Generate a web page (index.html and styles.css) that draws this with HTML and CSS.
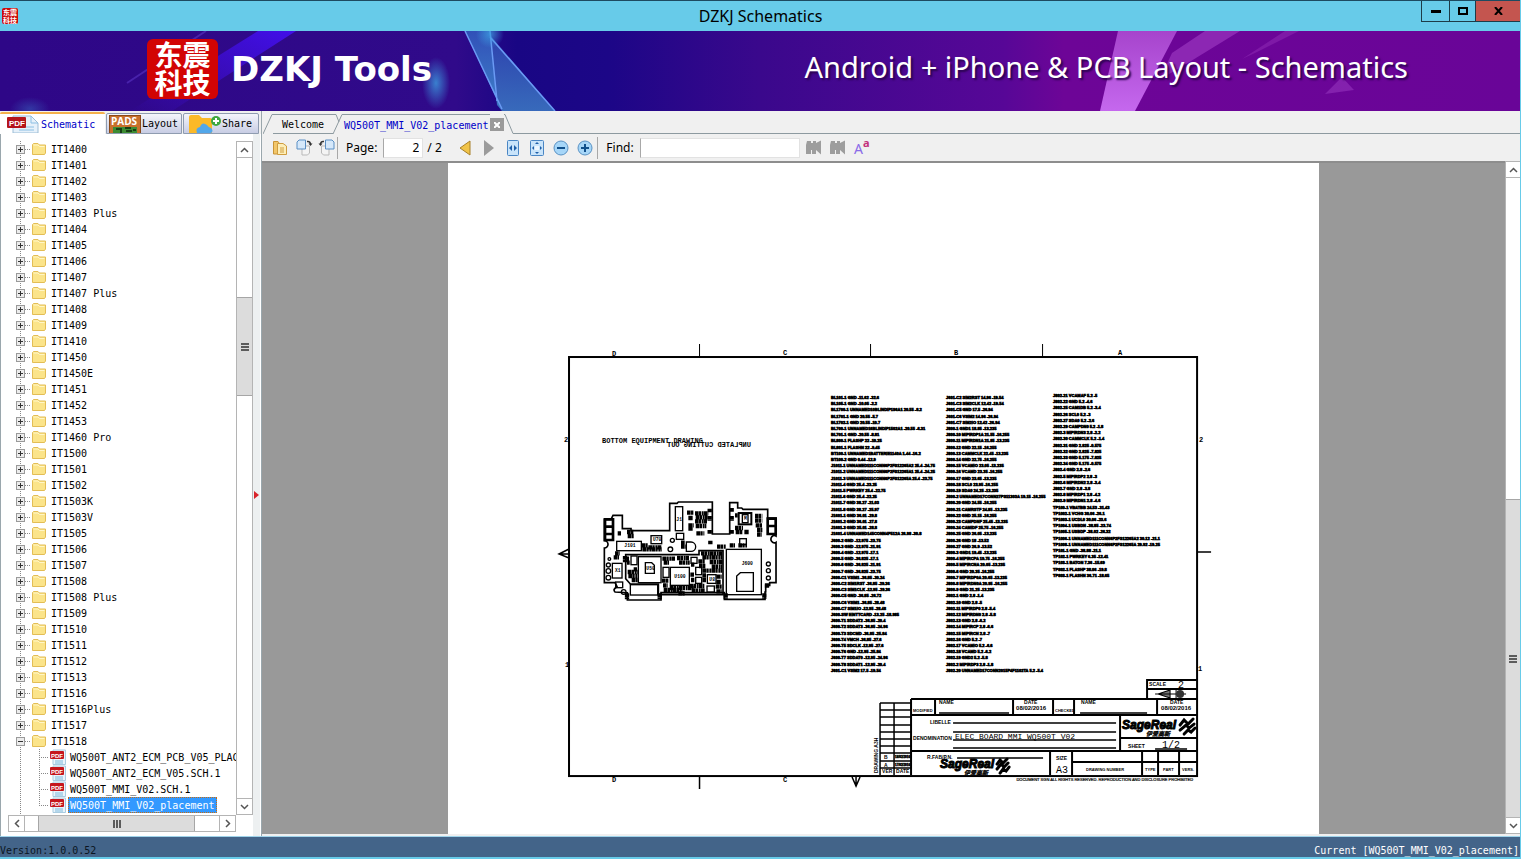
FILE: index.html
```html
<!DOCTYPE html>
<html lang="en">
    <head>
        <meta charset="utf-8">
        <title>DZKJ Schematics</title>
        <link rel="stylesheet" href="styles.css">
    </head>
    <body>
        <!-- shared icons -->
        <svg class="defs" width="0" height="0">
            <symbol id="folder" viewBox="0 0 14 12">
                <path d="M.5 11.500V1.500L1.500.500H6L7.500 2H13.500V10L12.500 11.500Z" fill="#fbe48a" stroke="#e3bd55"/>
                <path d="M1.500 2H6L7.500 3.500H12.500" fill="none" stroke="#fff6c8"/>
            </symbol>
            <symbol id="pdf" viewBox="0 0 16 16">
                <path d="M3 1H15.500V15.500H3Z" fill="#eaf4fb" stroke="#a9cbe0"/>
                <path d="M5 12H13M5 14H13" stroke="#7db9dc"/>
                <rect y="2" width="14" height="8" rx="1" fill="#c5161d"/>
                <text x="1" y="9" font-family="Liberation Sans" font-size="6" font-weight="bold" fill="#fff">PDF</text>
            </symbol>
            <symbol id="up" viewBox="0 0 9 6"><path d="M1 5L4.500 1.500L8 5" fill="none" stroke="#555" stroke-width="1.500"/></symbol>
            <symbol id="down" viewBox="0 0 9 6"><path d="M1 1L4.500 4.500L8 1" fill="none" stroke="#555" stroke-width="1.500"/></symbol>
            <symbol id="left" viewBox="0 0 6 9"><path d="M5 1L1.500 4.500L5 8" fill="none" stroke="#555" stroke-width="1.500"/></symbol>
            <symbol id="right" viewBox="0 0 6 9"><path d="M1 1L4.500 4.500L1 8" fill="none" stroke="#555" stroke-width="1.500"/></symbol>
            <symbol id="rotate" viewBox="0 0 17 17">
                <path d="M6 7H13.500V14L11.500 16H6Z" fill="#f4f4f4" stroke="#b9b9b9"/>
                <path d="M1 3L3 1H9.500V10H1Z" fill="#d5e8fa" stroke="#5a8fc4"/>
                <path d="M11 2.500Q14 2 14.500 5" fill="none" stroke="#333" stroke-width="1.500"/>
                <path d="M12.500 4.500H16.500L14.500 7Z" fill="#333"/>
            </symbol>
            <symbol id="binoc" viewBox="0 0 16 15">
                <path d="M1 1H5V3H7V1H10V3L15 .5V14.500L10 10V14H6V10H5V14H0V5Z" fill="#9d9d9d"/>
            </symbol>
        </svg>

        <header class="titlebar">
            <span class="app-icon">东震<br>科技</span>
            <h1>DZKJ Schematics</h1>
            <div class="win-buttons">
                <button class="min" aria-label="Minimize"><svg width="10" height="3"><path d="M0 0H10V3H0Z"/></svg></button>
                <button class="max" aria-label="Maximize"><svg width="10" height="8"><path d="M1 1H9V7H1Z" fill="none" stroke="#000" stroke-width="2"/></svg></button>
                <button class="close" aria-label="Close"><svg width="9" height="8"><path d="M1 0L8 8M8 0L1 8" stroke="#000" stroke-width="2"/></svg></button>
            </div>
        </header>

        <div class="banner">
            <svg class="banner-art" viewBox="0 0 1520 80" preserveAspectRatio="none">
                <defs>
                    <linearGradient id="base">
                        <stop offset="0" stop-color="#2e0787"/>
                        <stop offset=".3" stop-color="#300a8a"/>
                        <stop offset=".34" stop-color="#190684"/>
                        <stop offset=".4" stop-color="#1c0687"/>
                        <stop offset=".5" stop-color="#3a088c"/>
                        <stop offset=".66" stop-color="#570797"/>
                        <stop offset=".7" stop-color="#6d0597"/>
                        <stop offset="1" stop-color="#690598"/>
                    </linearGradient>
                    <linearGradient id="beam" x1="1" y1="0" x2="0" y2="1">
                        <stop offset="0" stop-color="#4410f4" stop-opacity=".9"/>
                        <stop offset="1" stop-color="#4410f4" stop-opacity="0"/>
                    </linearGradient>
                    <linearGradient id="shard" x1="0" y1="0" x2="0" y2="1">
                        <stop offset="0" stop-color="#3150b8"/>
                        <stop offset="1" stop-color="#3f83c9"/>
                    </linearGradient>
                    <linearGradient id="pink" x1="0" y1="0" x2="0" y2="1">
                        <stop offset="0" stop-color="#a644cc"/>
                        <stop offset="1" stop-color="#c568ee"/>
                    </linearGradient>
                    <radialGradient id="glow">
                        <stop offset="0" stop-color="#3c9de0" stop-opacity=".8"/>
                        <stop offset="1" stop-color="#3c9de0" stop-opacity="0"/>
                    </radialGradient>
                </defs>
                <rect width="1520" height="80" fill="url(#base)"/>
                <path d="M258 0H296L172 80H130Z" fill="url(#beam)"/>
                <path d="M206 0L127 52" stroke="#5a34c4" stroke-width="2" opacity=".6"/>
                <ellipse cx="436" cy="52" rx="14" ry="26" fill="url(#glow)"/>
                <ellipse cx="30" cy="78" rx="20" ry="12" fill="url(#glow)" opacity=".4"/>
                <path d="M465 0H490L497 72L502 80Z" fill="url(#shard)"/>
                <path d="M490 4L555 80H502L497 74Z" fill="url(#shard)" opacity=".8"/>
                <path d="M465 0L502 78M490 0L497 70M490 6L555 80" fill="none" stroke="#6a9af4" stroke-width="1.500"/>
                <circle cx="490" cy="3" r="14" fill="url(#glow)"/>
                <path d="M1118 0H1177L1135 80H1100Z" fill="url(#pink)"/>
                <path d="M1205 0H1240L1178 38L1160 48L1172 22Z" fill="#9a36bf" opacity=".7"/>
                <path d="M1285 0H1299L1255 22L1242 28Z" fill="#9a36bf" opacity=".4"/>
                <path d="M1342 46L1354 59L1325 63Z" fill="#9434bd" opacity=".6"/>
            </svg>
            <div class="banner-text">
                <div class="logo">东震<br>科技</div>
                <strong>DZKJ Tools</strong>
                <span>Android + iPhone &amp; PCB Layout - Schematics</span>
            </div>
        </div>

        <main>
            <aside>
                <nav class="side-tabs">
                    <button class="side-tab active">
                        <svg width="33" height="18" viewBox="0 0 33 18">
                            <path d="M6 1H24L31 8V18H6Z" fill="#e6f1fa" stroke="#9dbdd6"/>
                            <path d="M24 1V8H31M12 12H27M12 15H27" fill="none" stroke="#8cc0e4"/>
                            <rect width="19" height="11" y="2" rx="1" fill="#b5141b"/>
                            <text x="2" y="11" font-family="Liberation Sans" font-size="8" font-weight="bold" fill="#fff">PDF</text>
                        </svg>
                        Schematic
                    </button>
                    <button class="side-tab">
                        <svg width="32" height="18" viewBox="0 0 32 18">
                            <rect x=".5" y=".5" width="31" height="18" fill="#c8702c" stroke="#8a4a18"/>
                            <text x="2" y="10" font-family="Open Sans" font-size="10" font-weight="bold" fill="#fff">PADS</text>
                            <rect x="4" y="12" width="24" height="6" fill="#3d8c33"/>
                            <path d="M7 14H12V18M16 13H22M24 15H27M17 16H23" stroke="#173f15" stroke-width="2" fill="none"/>
                        </svg>
                        Layout
                    </button>
                    <button class="side-tab share">
                        <svg width="32" height="18" viewBox="0 0 32 18">
                            <path d="M0 18V2Q0 0 2 0H10L13 3H21Q23 3 23 5V18Z" fill="#fbb928"/>
                            <path d="M8 18Q6 13 11 12Q13 6 18 10Q20 13 22 13Q25 16 22 18Z" fill="#52a7ea"/>
                            <circle cx="27" cy="6" r="5" fill="#3fa83f"/>
                            <path d="M27 3V9M24 6H30" stroke="#fff" stroke-width="2"/>
                        </svg>
                        Share
                    </button>
                </nav>
                <div class="tree-panel">
                    <div class="tree-box">
                        <ul class="tree"></ul>
                        <div class="vscroll tree-vscroll">
                            <button aria-label="Scroll up"><svg width="9" height="6"><use href="#up"/></svg></button>
                            <div class="thumb"><i></i></div>
                            <button aria-label="Scroll down"><svg width="9" height="6"><use href="#down"/></svg></button>
                        </div>
                    </div>
                    <div class="hscroll">
                        <button aria-label="Scroll left"><svg width="6" height="9"><use href="#left"/></svg></button>
                        <div class="thumb"><i></i></div>
                        <button aria-label="Scroll right"><svg width="6" height="9"><use href="#right"/></svg></button>
                    </div>
                </div>
            </aside>
            <div class="splitter"><svg width="5" height="8"><path d="M0 0L5 4L0 8Z" fill="#d8232a"/></svg></div>

            <section class="viewer">
                <nav class="doc-tabs">
                    <svg class="tab-edge" width="10" height="20"><path d="M0 20L9 .5H10" fill="none" stroke="#8d9aa0"/></svg>
                    <button class="doc-tab">Welcome</button>
                    <svg class="tab-edge" width="10" height="20"><path d="M0 .5H3L6 8M0 20L9 .5H10" fill="none" stroke="#8d9aa0"/></svg>
                    <button class="doc-tab active">WQ500T_MMI_V02_placement</button>
                    <button class="tab-close" aria-label="Close tab"><svg width="6" height="6"><path d="M0 0L6 6M6 0L0 6" stroke="#fff" stroke-width="2"/></svg></button>
                    <svg class="tab-edge" width="10" height="20"><path d="M0 .5H1L9 19.500H10" fill="none" stroke="#8d9aa0"/></svg>
                    <div class="tab-rest"></div>
                </nav>
                <div class="toolbar">
                    <button class="tool" aria-label="Open"><svg width="16" height="16">
                        <path d="M1.500 1.500H6L7 3V14H1.500Z" fill="#f2c66a" stroke="#c99436"/>
                        <path d="M5.500 3.500H11L14.500 6V14.500H5.500Z" fill="#fdeeb8" stroke="#cf9d40"/>
                        <path d="M8 8H12M8 10H12M8 12H12" stroke="#cf9d40"/>
                    </svg></button>
                    <button class="tool" aria-label="Rotate right"><svg width="17" height="17"><use href="#rotate"/></svg></button>
                    <button class="tool flip" aria-label="Rotate left"><svg width="17" height="17"><use href="#rotate"/></svg></button>
                    <span class="sep"></span>
                    <label for="page">Page:</label>
                    <input id="page" class="page-input" value="2">
                    <span class="count">/ 2</span>
                    <button class="tool" aria-label="Previous page"><svg width="12" height="16"><path d="M11 1V15L1 8Z" fill="#f0c348" stroke="#a8802a"/></svg></button>
                    <button class="tool" aria-label="Next page"><svg width="12" height="16"><path d="M1 0V16L11 8Z" fill="#9b9b9b"/></svg></button>
                    <button class="tool" aria-label="Fit width"><svg width="14" height="16">
                        <rect x="1.500" y=".5" width="11" height="15" rx="1" fill="#c9e4fa" stroke="#4a86c4"/>
                        <path d="M6 5V11L3 8ZM8 5V11L11 8Z" fill="#1f5fa8"/>
                    </svg></button>
                    <button class="tool" aria-label="Fit page"><svg width="14" height="16">
                        <rect x=".5" y=".5" width="13" height="15" rx="1" fill="#c9e4fa" stroke="#4a86c4"/>
                        <path d="M7 2L9 4H5ZM7 14L9 12H5ZM2 8L4 6V10ZM12 8L10 6V10Z" fill="#1f5fa8"/>
                        <rect x="5" y="6" width="4" height="4" fill="#eef7ff"/>
                    </svg></button>
                    <button class="tool" aria-label="Zoom out"><svg width="16" height="16">
                        <circle cx="8" cy="8" r="7" fill="#a6d6f8" stroke="#5a92c4"/><path d="M4 8H12" stroke="#10508c" stroke-width="2"/>
                    </svg></button>
                    <button class="tool" aria-label="Zoom in"><svg width="16" height="16">
                        <circle cx="8" cy="8" r="7" fill="#a6d6f8" stroke="#5a92c4"/><path d="M4 8H12M8 4V12" stroke="#10508c" stroke-width="2"/>
                    </svg></button>
                    <span class="sep"></span>
                    <label for="find">Find:</label>
                    <input id="find" class="find-input">
                    <button class="tool" aria-label="Find previous"><svg width="16" height="15"><use href="#binoc"/></svg></button>
                    <button class="tool" aria-label="Find next"><svg width="16" height="15"><use href="#binoc"/></svg></button>
                    <button class="tool case" aria-label="Match case"><span>A</span><sup>a</sup></button>
                </div>
                <div class="canvas">
                    <div class="pages">
                        <svg class="sheet" viewBox="448 163 870 672">
                            <!-- frame -->
                            <rect x="569" y="357" width="628" height="419" fill="none" stroke="#000" stroke-width="2"/>
                            <path class="thin" d="M699.500 344V357M870.500 344V357M1042.500 344V357"/>
                            <path class="line" d="M1197 552H1211M699.500 776V789M569 549L559 554L569 558M559 554H569M852 777L856 786L860 777M856 777V786"/>
                            <g class="mark">
                                <text x="612" y="356">D</text><text x="783" y="355">C</text><text x="954" y="355">B</text><text x="1118" y="355">A</text>
                                <text x="612" y="782">D</text><text x="783" y="782">C</text>
                                <text x="564" y="442">2</text><text x="565" y="667">1</text><text x="1199" y="442">2</text><text x="1198" y="671">1</text>
                            </g>
                            <text class="note" x="602" y="443">BOTTOM EQUIPMENT DRAWING</text>
                            <text class="note" transform="translate(751 447) scale(-1 1)">UNPLATED CUTTING OUT</text>

                            <!-- board -->
                            <g class="board" transform="translate(595 430) scale(.3333)">
                                <path stroke-width="5" d="M28 268H48L54 256H82V296H108V302H224V220H246L250 216H352V312H404V218H428V234H440L444 238H518V264H543V318A10 11 0 1 0 543 337V458H524V466H512V486H510V508H388V488H198V510H97V488L60 486Q52 478 66 470L60 458H28V354A11 11 0 1 0 28 332Z"/>
                                <path stroke-width="5" d="M92 374H312V362H384V494H190V462H106L92 446Z"/>
                                <rect x="241" y="230" width="22" height="72"/>
                                <rect x="65" y="334" width="74" height="28"/>
                                <rect x="168" y="317" width="32" height="24"/>
                                <rect x="244" y="310" width="22" height="18"/>
                                <rect x="130" y="380" width="68" height="78"/>
                                <path d="M151 398H170L178 406V430H151Z"/>
                                <rect x="226" y="412" width="57" height="54"/>
                                <rect x="394" y="358" width="105" height="136"/>
                                <path d="M436 428H475V484H425V438Z"/>
                                <rect x="52" y="400" width="29" height="44"/>
                                <rect x="62" y="456" width="21" height="17"/>
                                <rect x="431" y="249" width="38" height="34" stroke-width="6"/>
                                <rect x="442" y="254" width="17" height="24"/>
                                <rect x="434" y="326" width="20" height="18"/>
                                <rect x="106" y="464" width="82" height="31"/>
                                <rect x="108" y="378" width="18" height="26"/>
                                <rect x="337" y="434" width="26" height="26"/>
                                <rect x="288" y="382" width="18" height="18"/>
                                <rect x="302" y="412" width="18" height="22"/>
                                <rect x="302" y="442" width="18" height="18"/>
                                <rect x="336" y="468" width="22" height="18"/>
                                <rect x="204" y="412" width="18" height="30"/>
                                <path d="M274 336H288A14 14 0 0 1 288 364H274Z"/>
                                <circle cx="226" cy="358" r="7"/><circle cx="232" cy="331" r="6"/><circle cx="86" cy="486" r="7"/>
                                <circle cx="40" cy="405" r="6"/><circle cx="40" cy="423" r="7"/><circle cx="40" cy="443" r="7"/><circle cx="43" cy="387" r="4"/>
                                <circle cx="520" cy="402" r="6"/><circle cx="520" cy="422" r="6"/><circle cx="520" cy="444" r="6"/>
                                <path d="M30 268H54V330H30ZM30 290H54M30 312H54M518 266H542V312H518ZM518 288H542" stroke-width="8"/>
                                <!-- small parts -->
                                <g class="parts">
                                    <path d="M276 248H296M300 250H340M302 262H338M300 274H336M280 286H296M302 288H334M304 310H328M280 264H294M280 296H294"/>
                                    <path d="M420 294H444M422 306H444M480 258H502M480 272H502M482 286H502M486 300H502M486 314H500M448 306H462M420 256H428"/>
                                    <path d="M140 346H158M142 358H200M160 352H200M96 306H116M98 318H116M68 310H78M366 350H392M404 346H420M430 346H456"/>
                                    <path d="M60 370H74M56 382H72M94 386H102M96 398H104M98 426H128M100 438H128M110 450H128M116 418H126"/>
                                    <path d="M202 386H240M206 398H222M246 384H282M252 398H284M200 452H222M204 466H218M206 480H262M224 474H296M250 490H270"/>
                                    <path d="M318 370H382M322 382H382M310 394H330M344 396H384M312 408H332M350 410H382M322 422H382M288 404H298M286 434H298M288 450H298M284 468H328M290 482H330M322 436H334M322 450H334M364 440H380M364 456H378M362 470H380M364 484H380"/>
                                    <path d="M258 338H270M258 350H272M344 236V248M410 234V246M344 300V312M410 300V312M344 258V272M410 258V272M392 490V506M508 490V506M96 490V508M194 490V508M516 460V474M90 378V398M346 332V344"/>
                                </g>
                                <g class="ref">
                                    <text x="244" y="272">J1</text><text x="88" y="352">J101</text><text x="174" y="333">U70</text><text x="154" y="420">U50</text>
                                    <text x="238" y="444">U100</text><text x="440" y="405">J600</text><text x="60" y="426">X1</text><text x="447" y="270">M</text><text x="343" y="452">U8</text>
                                </g>
                            </g>

                            <g class="coords"></g>

                            <!-- title block -->
                            <path class="heavy" d="M1147 699V680H1197M1147 689H1197M911 699H1197M911 699V775M911 715H1197M911 751H1197M1013 699V715M1053 699V715M1074 699V715M1157 699V715M935 699V715M1120 715V751M1120 738H1197M1050 751V775M1072 751V775M1072 762H1197M1142 751V775M1158 751V775M1179 751V775"/>
                            <path class="line" d="M880 703H911M880 710H911M880 717H911M880 725H911M880 732H911M880 739H911M880 746H911M880 753H911M880 761H911M880 768H911M880 703V775M894 703V775"/>
                            <path class="line" d="M939 713H1009M1080 713H1147M953 723H1116M953 732H1116M953 740H1116M953 748H1116M957 758H1043M1155 749H1187"/>
                            <path d="M1158 694L1170 690V698ZM1176 689V699M1155 694H1186" fill="#777" stroke="#000"/>
                            <circle cx="1180" cy="694" r="4" fill="#333"/>
                            <g class="tb">
                                <text x="1149" y="686">SCALE</text><text x="939" y="704">NAME</text><text x="1024" y="704">DATE</text><text x="1081" y="704">NAME</text><text x="1170" y="704">DATE</text>
                                <text x="1128" y="748">SHEET</text><text x="930" y="724">LIBELLE</text><text x="913" y="740">DENOMINATION</text><text x="927" y="759">R.FAB/P.N.</text>
                                <text x="1056" y="760">SIZE</text><text x="882" y="773">VER</text><text x="896" y="773">DATE</text>
                                <text x="884" y="759">B</text><text x="884" y="767">A</text>
                                <text transform="translate(878 773) rotate(-90)">DRAWING A3H</text>
                            </g>
                            <g class="tb tiny">
                                <text x="913" y="712">MODIFIED</text><text x="1055" y="712">CHECKED</text><text x="1086" y="771">DRAWING NUMBER</text>
                                <text x="1145" y="771">TYPE</text><text x="1163" y="771">PART</text><text x="1182" y="771">VERS.</text>
                                <text class="rights" x="1193" y="781">DOCUMENT SGN ALL RIGHTS RESERVED. REPRODUCTION AND DISCLOSURE PROHIBITED</text>
                            </g>
                            <g class="tb rev"><text x="895" y="758">18/02/2016</text><text x="895" y="766">17/02/2016</text></g>
                            <g class="tb date"><text x="1016" y="710">08/02/2016</text><text x="1161" y="710">08/02/2016</text></g>
                            <g class="value">
                                <text x="955" y="739">ELEC BOARD MMI WQ500T V02</text>
                                <text x="1162" y="748" class="big">1/2</text><text x="1056" y="773" class="big">A3</text><text x="1178" y="688" class="big">2</text>
                            </g>
                            <g class="maker">
                                <text x="1122" y="729">SageReal</text><text x="1146" y="736" class="cn">伊爱高新</text>
                                <path d="M1180 725L1184 720L1188 724L1193 719M1180 730L1186 725L1189 728L1194 724M1184 734L1188 730L1191 732L1195 728"/>
                                <text x="940" y="768">SageReal</text><text x="964" y="775" class="cn">伊爱高新</text>
                                <path d="M997 764L1000 760L1003 763L1007 759M997 769L1001 764L1004 767L1008 763M1000 773L1003 769L1006 771L1009 767"/>
                            </g>
                        </svg>
                    </div>
                    <div class="vscroll page-vscroll">
                        <button aria-label="Page up"><svg width="9" height="6"><use href="#up"/></svg></button>
                        <div class="thumb"><i></i></div>
                        <button aria-label="Page down"><svg width="9" height="6"><use href="#down"/></svg></button>
                    </div>
                </div>
            </section>
        </main>

        <footer><span>Version:1.0.0.52</span><span class="current">Current [WQ500T_MMI_V02_placement]</span></footer>
        <script src="script.js"></script>
    </body>
</html>
```
FILE: styles.css
```css
*{
    box-sizing: border-box;
}
body{
    display: flex;
    flex-direction: column;
    height: 100vh;
    margin: 0px;
    overflow: hidden;
    background-color: #f0f0f0;
    border-right: 1px solid #67cbe9;
    font-family: "DejaVu Sans Mono", monospace;
    font-size: 10px;
}
button{
    padding: 0px;
    border: none;
    background: none;
    color: inherit;
    font: inherit;
}
svg{
    display: block;
    flex: none;
}
.defs{
    position: absolute;
}

/* title bar */
.titlebar{
    display: grid;
    grid-template-columns: 1fr auto 1fr;
    align-items: center;
    height: 31px;
    margin-right: -1px;
    background-color: #67cbe9;
    border-top: 1px solid #1d4a60;
}
.app-icon{
    width: 16px;
    height: 16px;
    margin-left: 2px;
    border-radius: 2px;
    background-color: #cc0a0a;
    color: white;
    font: bold 7px/8px "Noto Sans CJK SC", sans-serif;
    text-align: center;
}
h1{
    margin: 0px;
    font: 16px/20px "Noto Sans", sans-serif;
}
.win-buttons{
    display: flex;
    align-self: start;
    justify-self: end;
}
.win-buttons button{
    display: flex;
    align-items: center;
    justify-content: center;
    height: 21px;
    border: 1px solid #1d3b48;
    border-top: none;
    border-right: none;
}
.min{
    width: 28px;
}
.max{
    width: 26px;
}
.win-buttons .close{
    width: 46px;
    background-color: #c4554f;
}

/* banner */
.banner{
    display: grid;
    flex: none;
    height: 80px;
}
.banner-art{
    grid-area: 1 / 1;
    width: 100%;
    height: 80px;
}
.banner-text{
    grid-area: 1 / 1;
    z-index: 1;
    display: flex;
    align-items: center;
    padding: 0px 112px 4px 147px;
    color: white;
    font-family: "Noto Sans", sans-serif;
}
.logo{
    width: 71px;
    height: 60px;
    margin-right: 13px;
    padding-top: 1px;
    border-radius: 6px;
    background-color: #d20404;
    font: bold 28px/28px "Noto Sans CJK SC", sans-serif;
    text-align: center;
}
.banner-text strong{
    font: bold 34px/40px "DejaVu Sans", sans-serif;
}
.banner-text span{
    margin-left: auto;
    padding-bottom: 4px;
    font-size: 29px;
    line-height: 40px;
    text-shadow: 2px 2px 2px #2b0450;
}

/* left side */
main{
    display: flex;
    flex: 1;
    min-height: 0px;
}
aside{
    display: flex;
    flex-direction: column;
    width: 253px;
}
.side-tabs{
    display: flex;
    gap: 1px;
    width: 260px;
    height: 23px;
    padding-top: 1px;
}
.side-tab{
    display: flex;
    align-items: center;
    gap: 1px;
    width: 76px;
    height: 21px;
    margin-top: 1px;
    padding-left: 2px;
    overflow: hidden;
    border: 1px solid #8f9cb0;
    border-radius: 2px 2px 0px 0px;
    background: linear-gradient(#f4f5fb, #c8cde4);
}
.side-tab.share{
    padding-left: 5px;
}
.side-tab.active{
    width: 105px;
    height: 22px;
    margin-top: 0px;
    padding-left: 7px;
    border: none;
    border-top: 2px solid #f5b04a;
    background: white;
    color: #0000c8;
}
.tree-panel{
    flex: 1;
    display: flex;
    flex-direction: column;
    min-height: 0px;
    padding: 7px 0px 4px 7px;
    border-left: 1px solid #9aa7ad;
    background-color: white;
}
.tree-box{
    flex: 1;
    display: flex;
    min-height: 0px;
}
.tree{
    flex: 1;
    min-width: 0px;
    margin: 0px;
    padding: 0px;
    overflow: hidden;
    list-style: none;
    white-space: nowrap;
    background: repeating-linear-gradient(#888 0px 1px, transparent 1px 2px) 12px 0px / 1px 100% no-repeat;
}
.tree ul{
    margin: 0px;
    padding: 0px 0px 0px 31px;
    list-style: none;
    background: repeating-linear-gradient(#888 0px 1px, transparent 1px 2px) 31px 0px / 1px 56px no-repeat;
}
.row{
    display: flex;
    align-items: center;
    height: 16px;
    padding-left: 8px;
}
.row span{
    margin-left: 5px;
}
.toggle{
    flex: none;
    display: flex;
    align-items: center;
    justify-content: center;
    width: 9px;
    height: 9px;
    border: 1px solid #9a9a9a;
    background-color: #ececec;
}
.dots{
    flex: none;
    width: 6px;
    height: 1px;
    margin-right: 1px;
    background: repeating-linear-gradient(90deg, #888 0px 1px, transparent 1px 2px);
}
.tree ul .row{
    padding-left: 0px;
}
.tree ul .dots{
    width: 10px;
}
.tree ul span{
    margin-left: 2px;
    padding: 1px 1px 0px;
    line-height: 13px;
    border: 1px solid transparent;
}
.tree ul .selected{
    border: 1px dotted #c86c10;
    background-color: #3399ff;
    color: white;
}

/* scrollbars */
.vscroll{
    display: flex;
    flex-direction: column;
    width: 17px;
    border: 1px solid #b4b4b4;
    background-color: white;
}
.vscroll button, .hscroll button{
    flex: none;
    display: flex;
    align-items: center;
    justify-content: center;
    width: 15px;
    height: 16px;
}
.vscroll button:first-child{
    border-bottom: 1px solid #b4b4b4;
}
.vscroll button:last-child{
    margin-top: auto;
    border-top: 1px solid #b4b4b4;
}
.thumb{
    display: flex;
    align-items: center;
    justify-content: center;
    background-color: #dcdcdc;
    border: solid #a6a6a6;
    border-width: 1px 0px;
}
.thumb i{
    width: 8px;
    height: 8px;
    background: repeating-linear-gradient(#5c5c5c 0px 2px, transparent 2px 3px);
}
.tree-vscroll .thumb{
    height: 99px;
    margin-top: 139px;
}
.hscroll{
    display: flex;
    height: 17px;
    margin-right: 17px;
    border: 1px solid #b4b4b4;
}
.hscroll button{
    height: 15px;
    width: 16px;
}
.hscroll button:last-child{
    margin-left: auto;
    border-left: 1px solid #b4b4b4;
}
.hscroll button:first-child{
    border-right: 1px solid #b4b4b4;
}
.hscroll .thumb{
    width: 157px;
    margin-left: 13px;
    border-width: 0px 1px;
}
.hscroll .thumb i{
    background: repeating-linear-gradient(90deg, #5c5c5c 0px 2px, transparent 2px 3px);
}
.splitter{
    display: flex;
    align-items: center;
    width: 8px;
    margin-top: 23px;
    padding: 20px 0px 0px 1px;
    background: #edf0f1;
    border-right: 1px solid white;
}

/* document area */
.viewer{
    flex: 1;
    display: flex;
    flex-direction: column;
    min-width: 0px;
    border-left: 1px solid #9aa7ad;
}
.doc-tabs{
    display: flex;
    align-items: end;
    height: 23px;
    padding-left: 1px;
}
.doc-tab{
    height: 20px;
    padding: 1px 1px 0px;
    border-top: 1px solid #8d9aa0;
    border-bottom: 1px solid #8d9aa0;
}
.doc-tab:first-of-type{
    width: 60px;
}
.doc-tab.active{
    border-bottom: none;
    color: #0000c8;
}
.tab-close{
    display: flex;
    align-items: center;
    justify-content: center;
    width: 14px;
    height: 20px;
    border: solid #f0f0f0;
    border-width: 4px 0px 3px;
    background-color: #9a9a9a;
}
.tab-rest{
    flex: 1;
    border-bottom: 1px solid #8d9aa0;
}
.toolbar{
    display: flex;
    align-items: center;
    height: 27px;
    padding-left: 6px;
    font: 12px/16px "Noto Sans", sans-serif;
}
.tool{
    flex: none;
    display: flex;
    align-items: center;
    justify-content: center;
    width: 24px;
    height: 22px;
}
.tool.flip{
    width: 21px;
}
.flip svg{
    transform: scaleX(-1);
}
.sep{
    width: 1px;
    height: 22px;
    margin-right: 8px;
    background-color: #a8a8a8;
}
.toolbar input{
    height: 20px;
    margin: 0px 4px 0px 6px;
    border: 1px solid #e2e2e2;
    border-left-color: #a8a8a8;
    background-color: white;
    font: inherit;
}
.toolbar .page-input{
    width: 40px;
    padding: 0px 3px;
    text-align: right;
}
.toolbar .find-input{
    width: 160px;
    margin-right: 2px;
}
.count{
    width: 26px;
}
.case{
    align-items: start;
    color: #8a6be8;
    font-size: 14px;
    line-height: 24px;
}
.case sup{
    color: #c2307c;
    font-size: 11px;
    font-weight: bold;
    line-height: 12px;
}
.canvas{
    flex: 1;
    display: flex;
    min-height: 0px;
    margin-bottom: 2px;
}
.pages{
    flex: 1;
    overflow: hidden;
    border-top: 2px solid #8d8d8d;
    background-color: #999;
}
.sheet{
    width: 70%;
    margin: 0px auto;
    background-color: white;
}
.page-vscroll{
    width: 15px;
    border-right: none;
}
.page-vscroll .thumb{
    flex: 1;
    margin-top: 321px;
    border-bottom: none;
}

/* drawing */
.sheet text{
    font-family: "Liberation Mono", monospace;
}
.thin, .line, .heavy{
    fill: none;
    stroke: black;
    stroke-width: 1px;
}
.line{
    stroke-width: 1.5px;
}
.heavy{
    stroke-width: 2px;
}
.sheet .mark text, .sheet .note{
    font-size: 7px;
    font-weight: bold;
}
.sheet .coords text{
    font-family: "Liberation Sans", sans-serif;
    font-size: 4px;
    font-weight: bold;
    stroke: black;
    stroke-width: .6px;
}
.board{
    fill: none;
    stroke: black;
    stroke-width: 4px;
}
.parts{
    stroke-width: 13px;
    stroke-dasharray: 11 1 7 2 5 1;
}
.ref text{
    fill: black;
    stroke: none;
    font-size: 14px;
    font-weight: bold;
}
.sheet .tb text{
    font-family: "Liberation Sans", sans-serif;
    font-size: 5px;
    font-weight: bold;
}
.sheet .tiny text{
    font-size: 4px;
}
.sheet .tiny .rights{
    text-anchor: end;
    font-weight: normal;
    stroke: black;
    stroke-width: .2px;
}
.sheet .rev text{
    font-size: 3px;
    stroke: black;
    stroke-width: .4px;
}
.sheet .date text{
    font-size: 6px;
}
.sheet .value text{
    font-size: 8px;
}
.sheet .value .big{
    font-size: 10px;
}
.sheet .maker text{
    font: italic bold 12px "Liberation Sans", sans-serif;
    stroke: black;
    stroke-width: 1px;
}
.sheet .maker .cn{
    font: italic bold 6px "Noto Sans CJK SC", sans-serif;
    stroke-width: .3px;
}
.maker path{
    fill: none;
    stroke: black;
    stroke-width: 3px;
    stroke-linecap: round;
}

footer{
    display: flex;
    align-items: end;
    justify-content: space-between;
    height: 23px;
    padding-bottom: 1px;
    background-color: #436489;
    border-top: 1px solid #9fd3ea;
    border-bottom: 2px solid #67cbe9;
    color: #0b1622;
}
.current{
    margin-right: 1px;
    color: white;
}
```
FILE: script.js
```js
const folders = ["1400", "1401", "1402", "1403", "1403 Plus", "1404", "1405", "1406", "1407", "1407 Plus", "1408", "1409", "1410",
    "1450", "1450E", "1451", "1452", "1453", "1460 Pro", "1500", "1501", "1502", "1503K", "1503V", "1505", "1506", "1507", "1508",
    "1508 Plus", "1509", "1510", "1511", "1512", "1513", "1516", "1516Plus", "1517", "1518"];
const files = ["WQ500T_ANT2_ECM_PCB_V05_PLACEMENT", "WQ500T_ANT2_ECM_V05.SCH.1", "WQ500T_MMI_V02.SCH.1", "WQ500T_MMI_V02_placement"];

const columns = [
    {x: 831, y: 399, rows: `BL101-1 GND -11.62 -32.6
BL105-1 GND -10.05 -2.2
BL1700-1 UNNAMED10BLINDIP196A1 20.55 -8.2
BL1701-1 GND 20.55 -5.7
BL1702-1 GND 20.55 -10.7
BL700-1 UNNAMED16BLINDIP1502A1 -20.55 -6.31
BL701-1 GND -20.55 -8.81
BL800-1 FLASHP 22 -10.25
BL801-1 FLASHN 22 -9.45
BT100-1 UNNAMED1BATTERIE1140A 1.44 -16.2
BT100-2 GND 0.44 -12.9
J1011-1 UNNAMED111CONN6P2FS12265A2 25.4 -24.75
J1011-2 UNNAMED111CONN6P2FS12265A1 25.4 -24.25
J1011-3 UNNAMED111CONN6P2FS12265A 25.4 -23.75
J1011-4 GND 25.4 -23.25
J1011-5 PWRKEY 25.4 -22.75
J1011-6 GND 25.4 -22.25
J1011-7 GND 38.27 -21.03
J1011-8 GND 38.27 -25.97
J1601-1 GND 36.01 -29.8
J1601-2 GND 36.01 -27.8
J1601-3 GND 25.01 -28.8
J1601-4 UNNAMED145CONN4P512A 26.98 -30.8
J600-2 GND -12.975 -23.75
J600-3 GND -12.975 -21.91
J600-4 GND -12.975 -17.1
J600-5 GND -36.825 -17.1
J600-6 GND -36.825 -21.91
J600-7 GND -36.825 -23.75
J600-C1 VSIM1 -36.85 -30.24
J600-C2 SIM1RST -36.85 -29.36
J600-C3 SIM1CLK -12.95 -29.36
J600-C5 GND -36.85 -26.72
J600-C6 VSIM1 -36.85 -28.48
J600-C7 SIM1IO -12.95 -28.48
J600-SW EINTTCARD -13.25 -18.985
J600-T1 SDDAT2 -36.85 -20.4
J600-T2 SDDAT3 -36.85 -24.96
J600-T3 SDCMD -36.85 -25.84
J600-T4 VMCH -36.85 -27.6
J600-T5 SDCLK -12.95 -27.6
J600-T6 GND -12.95 -25.84
J600-T7 SDDAT0 -12.95 -24.96
J600-T8 SDDAT1 -12.95 -20.4
J601-C1 VSIM2 17.5 -19.54`},
    {x: 946, y: 399, rows: `J601-C2 SIM2RST 14.96 -19.54
J601-C3 SIM2CLK 12.42 -19.54
J601-C5 GND 17.5 -26.94
J601-C6 VSIM2 14.96 -26.94
J601-C7 SIM2IO 12.42 -26.94
J800-1 GND1 18.85 -13.235
J800-10 MIPIRDP1A 21.55 -16.255
J800-11 MIPIRDN1A 21.85 -13.235
J800-12 GND 22.15 -16.255
J800-13 CAMMCLK 22.45 -13.235
J800-14 GND 22.75 -16.255
J800-15 VCAMIO 23.05 -13.235
J800-16 VCAMD 23.35 -16.255
J800-17 GND 23.65 -13.235
J800-18 SCL0 23.95 -16.255
J800-19 SDA0 24.25 -13.235
J800-2 UNNAMED17CONN27PS11303A 19.15 -16.255
J800-20 GND 24.55 -16.255
J800-21 CAMRSTF 24.85 -13.235
J800-22 GND 25.15 -16.255
J800-23 CAMPDNF 25.45 -13.235
J800-24 CAMIDF 25.75 -16.255
J800-25 GND 26.05 -13.235
J800-26 GND 18 -13.52
J800-27 GND 26.9 -13.52
J800-3 GND1 19.45 -13.235
J800-4 MIPIRCPA 19.75 -16.255
J800-5 MIPIRCNA 20.05 -13.235
J800-6 GND 20.35 -16.255
J800-7 MIPIRDP0A 20.65 -13.235
J800-8 MIPIRDN0A 20.95 -16.255
J800-9 GND 21.25 -13.235
J802-1 GND 2.8 -1.4
J802-10 GND 2.8 -5
J802-11 MIPIRDP0 2.8 -5.4
J802-12 MIPIRDN0 2.8 -5.8
J802-13 GND 2.8 -6.2
J802-14 MIPIRCP 2.8 -6.6
J802-15 MIPIRCN 2.8 -7
J802-16 GND 5.2 -7
J802-17 VCAMIO 5.2 -6.6
J802-18 VCAMD 5.2 -6.2
J802-19 GND2 5.2 -5.8
J802-2 MIPIRDP3 2.8 -1.8
J802-20 UNNAMED17CONN2015P4F1102TA 5.2 -5.4`},
    {x: 1053, y: 397, rows: `J802-21 VCAMAF 5.2 -5
J802-22 GND 5.2 -4.6
J802-25 CAM1DB 5.2 -3.4
J802-26 SCL0 5.2 -3
J802-27 SDA0 5.2 -2.6
J802-29 CAMPDN0 5.2 -1.8
J802-3 MIPIRDN3 2.8 -2.2
J802-30 CAMMCLK 5.2 -1.4
J802-31 GND 2.825 -0.575
J802-32 GND 2.825 -7.825
J802-33 GND 5.175 -7.825
J802-34 GND 5.175 -0.575
J802-4 GND 2.8 -2.6
J802-5 MIPIRDP2 2.8 -3
J802-6 MIPIRDN2 2.8 -3.4
J802-7 GND 2.8 -3.8
J802-8 MIPIRDP1 2.8 -4.2
J802-9 MIPIRDN1 2.8 -4.6
TP100-1 VBATBB 24.53 -31.43
TP1002-1 VCHG 30.06 -26.1
TP1003-1 UCDL0 30.06 -23.6
TP1004-1 USBDN -38.85 -23.74
TP1005-1 USBDP -38.02 -26.32
TP1006-1 UNNAMED111CONN6P2FS12265A2 30.12 -21.1
TP1008-1 UNNAMED111CONN6P2FS12265A 29.92 -19.25
TP101-1 GND -38.88 -21.1
TP102-1 PWRKEY 6.35 -12.41
TP103-1 BATON 7.36 -15.69
TP802-1 FLASHP 38.06 -19.8
TP803-1 FLASHN 36.71 -18.65`}
];

// model tree
const tree = document.querySelector(".tree");
let html = "";
for(const name of folders){
    const open = name === "1518";
    const sign = open ? "M1 3.5H6" : "M1 3.5H6M3.5 1V6";
    html += `<li><div class="row"><button class="toggle" aria-label="Toggle IT${name}"><svg width="7" height="7"><path d="${sign}" stroke="#333"/></svg></button>
        <i class="dots"></i><svg width="14" height="12"><use href="#folder"/></svg><span>IT${name}</span></div></li>`;
}
html += "<li><ul>";
files.forEach((name, i) => {
    html += `<li class="row"><i class="dots"></i><svg width="16" height="16"><use href="#pdf"/></svg><span class="${i === 3 ? "selected" : ""}">${name}</span></li>`;
});
tree.innerHTML = html + "</ul></li>";

// coordinate lists on the drawing
const pitch = 6.2;
let coords = "";
for(const col of columns){
    col.rows.split("\n").forEach((row, i) => {
        coords += `<text x="${col.x}" y="${col.y + i * pitch}">${row}</text>`;
    });
}
document.querySelector(".coords").innerHTML = coords;
```
